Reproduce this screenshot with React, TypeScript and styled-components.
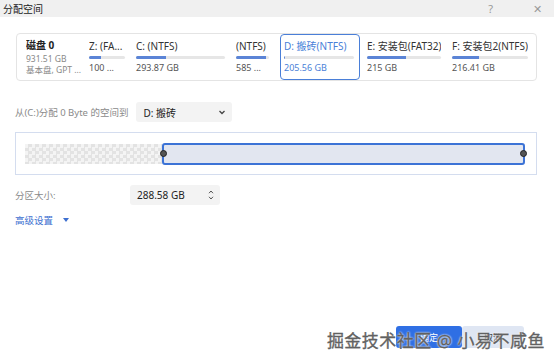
import React from 'react';
import styled, { createGlobalStyle } from 'styled-components';

const GlobalStyle = createGlobalStyle`
  html, body {
    margin: 0;
    padding: 0;
    background: #ffffff;
  }
  body {
    font-family: 'Noto Sans', 'Noto Sans CJK SC', sans-serif;
    color: #333;
  }
`;

const Window = styled.div`
  position: relative;
  width: 554px;
  height: 364px;
  display: flex;
  flex-direction: column;
  background: #fff;
  overflow: hidden;
`;

const TitleBar = styled.div`
  height: 17px;
  display: flex;
  align-items: center;
  justify-content: space-between;
  padding: 0 12px 0 3px;
  background: #f0f0f0;
  font-size: 10px;
  color: #222;
`;

const TitleActions = styled.div`
  display: flex;
  gap: 40px;
  color: #999;
  font-size: 11px;
`;

const Body = styled.div`
  flex: 1;
  display: flex;
  flex-direction: column;
  padding: 16px 17px 0 15px;
`;

const DiskCard = styled.div`
  display: flex;
  align-items: stretch;
  height: 46px;
  margin-left: 1px;
  border: 1px solid #e4e4e4;
  border-radius: 4px;
  padding: 0 0 0 9px;
`;

const DiskInfo = styled.div`
  flex: 0 0 63px;
  display: flex;
  flex-direction: column;
  justify-content: center;
  font-size: 8.5px;
  color: #888;
  line-height: 11px;
  white-space: nowrap;
  overflow: hidden;
`;

const DiskName = styled.div`
  font-size: 10px;
  font-weight: 700;
  color: #222;
  margin-bottom: 2px;
`;

const Part = styled.div<{ $w?: number; $selected?: boolean }>`
  flex: ${(p) => (p.$w ? `0 0 ${p.$w}px` : '1 1 auto')};
  min-width: 0;
  box-sizing: border-box;
  display: flex;
  flex-direction: column;
  justify-content: center;
  padding: ${(p) => (p.$selected ? '0 5px 0 3px' : p.$w ? '0 11px 0 0' : '0 8px 0 0')};
  margin: ${(p) => (p.$selected ? '0 7px 0 0' : '0')};
  border: ${(p) => (p.$selected ? '1.5px solid #4a7fd8' : 'none')};
  border-radius: 4px;
  color: ${(p) => (p.$selected ? '#4a7fd8' : '#333')};
  font-size: 10px;
  line-height: 12px;
`;

const PartLabel = styled.div`
  white-space: nowrap;
  overflow: hidden;
`;

const Bar = styled.div`
  height: 3px;
  margin: 4px 0 3px;
  background: #e6e6e6;
  border-radius: 2px;
  overflow: hidden;
`;

const BarFill = styled.div`
  height: 100%;
  background: #5b84d6;
`;

const PartSize = styled.div<{ $selected?: boolean }>`
  font-size: 9px;
  color: ${(p) => (p.$selected ? '#4a7fd8' : '#555')};
  white-space: nowrap;
`;

const FromRow = styled.div`
  display: flex;
  align-items: center;
  gap: 8px;
  margin-top: 21px;
  font-size: 9.5px;
  color: #8a8a8a;
`;

const Select = styled.div<{ $w: number }>`
  width: ${(p) => p.$w}px;
  height: 20px;
  box-sizing: border-box;
  display: flex;
  align-items: center;
  justify-content: space-between;
  padding: 0 6px 0 7px;
  background: #f3f3f3;
  border-radius: 3px;
  font-size: 10px;
  color: #222;
`;

const Chevron = styled.span`
  display: flex;
  color: #555;
`;

const PartitionBox = styled.div`
  margin-top: 10px;
  height: 43px;
  box-sizing: border-box;
  border: 1px solid #d4ddef;
  display: flex;
  align-items: center;
  padding: 0 11px 0 9px;
`;

const Checker = styled.div`
  width: 137px;
  height: 20px;
  background-color: #f4f4f4;
  background-image: conic-gradient(#e3e3e3 25%, transparent 0 50%, #e3e3e3 0 75%, transparent 0);
  background-size: 7px 7px;
`;

const Handle = styled.span<{ $side: 'left' | 'right' }>`
  position: absolute;
  top: 50%;
  ${(p) => p.$side}: -4px;
  width: 7px;
  height: 7px;
  margin-top: -4px;
  border-radius: 50%;
  background: #555;
  border: 1px solid #222;
  box-sizing: border-box;
`;

const Volume = styled.div`
  position: relative;
  flex: 1;
  height: 22px;
  box-sizing: border-box;
  border: 2px solid #3c73d6;
  border-radius: 3px;
  background: #e2e6f0;
`;

const SizeRow = styled.div`
  display: flex;
  align-items: center;
  margin-top: 10px;
  font-size: 9.5px;
  color: #8a8a8a;
`;

const SizeLabel = styled.div`
  width: 115px;
`;

const SpinArrows = styled.div`
  display: flex;
  flex-direction: column;
  align-items: center;
  gap: 2px;
`;

const Advanced = styled.div`
  display: flex;
  align-items: center;
  gap: 10px;
  margin-top: 8px;
  font-size: 9.5px;
  color: #3d6fd0;
`;

const Footer = styled.div`
  height: 34px;
  display: flex;
  justify-content: flex-end;
  align-items: center;
  padding: 0 30px 10px 0;
`;

const Button = styled.div<{ $primary?: boolean }>`
  width: ${(p) => (p.$primary ? 66 : 62)}px;
  height: 22px;
  display: flex;
  align-items: center;
  justify-content: center;
  border-radius: 3px;
  font-size: 9px;
  background: ${(p) => (p.$primary ? '#2f6fe4' : '#dfe6f3')};
  color: ${(p) => (p.$primary ? '#fff' : '#333')};
`;

const Watermark = styled.div`
  position: absolute;
  right: 9px;
  bottom: 12px;
  font-size: 17px;
  color: #666;
  letter-spacing: 0.5px;
  -webkit-text-stroke: 0.3px #555;
  text-shadow: 0 0 2px #fff, 0 0 2px #fff;
  white-space: nowrap;
`;

const parts = [
  { label: 'Z: (FA...', size: '100 ...', w: 47, fill: 33 },
  { label: 'C: (NTFS)', size: '293.87 GB', w: 100, fill: 34 },
  { label: '(NTFS)', size: '585 ...', w: 44, fill: 92 },
];

const parts2 = [
  { label: 'E: 安装包(FAT32)', size: '215 GB', w: 85, fill: 53 },
  { label: 'F: 安装包2(NTFS)', size: '216.41 GB', w: 0, fill: 36 },
];

const App = () => {
  return (
    <Window>
      <GlobalStyle />
      <TitleBar>
        <span>分配空间</span>
        <TitleActions>
          <span>?</span>
          <span>✕</span>
        </TitleActions>
      </TitleBar>

      <Body>
        <DiskCard>
          <DiskInfo>
            <DiskName>磁盘 0</DiskName>
            <div>931.51 GB</div>
            <div>基本盘, GPT ...</div>
          </DiskInfo>
          {parts.map((p) => (
            <Part key={p.label} $w={p.w}>
              <PartLabel>{p.label}</PartLabel>
              <Bar>
                <BarFill style={{ width: `${p.fill}%` }} />
              </Bar>
              <PartSize>{p.size}</PartSize>
            </Part>
          ))}
          <Part $w={80} $selected>
            <PartLabel>D: 搬砖(NTFS)</PartLabel>
            <Bar>
              <BarFill style={{ width: '2%' }} />
            </Bar>
            <PartSize $selected>205.56 GB</PartSize>
          </Part>
          {parts2.map((p) => (
            <Part key={p.label} $w={p.w || undefined}>
              <PartLabel>{p.label}</PartLabel>
              <Bar>
                <BarFill style={{ width: `${p.fill}%` }} />
              </Bar>
              <PartSize>{p.size}</PartSize>
            </Part>
          ))}
        </DiskCard>

        <FromRow>
          <span>从(C:)分配 0 Byte 的空间到</span>
          <Select $w={96}>
            <span>D: 搬砖</span>
            <Chevron>
              <svg width="8" height="8" viewBox="0 0 8 8">
                <path d="M1.5 3 L4 5.5 L6.5 3" stroke="#444" strokeWidth="1.3" fill="none" />
              </svg>
            </Chevron>
          </Select>
        </FromRow>

        <PartitionBox>
          <Checker />
          <Volume>
            <Handle $side="left" />
            <Handle $side="right" />
          </Volume>
        </PartitionBox>

        <SizeRow>
          <SizeLabel>分区大小:</SizeLabel>
          <Select $w={90}>
            <span>288.58 GB</span>
            <SpinArrows>
              <svg width="6" height="4" viewBox="0 0 6 4">
                <path d="M1 3.2 L3 1 L5 3.2" stroke="#555" strokeWidth="1" fill="none" />
              </svg>
              <svg width="6" height="4" viewBox="0 0 6 4">
                <path d="M1 0.8 L3 3 L5 0.8" stroke="#555" strokeWidth="1" fill="none" />
              </svg>
            </SpinArrows>
          </Select>
        </SizeRow>

        <Advanced>
          <span>高级设置</span>
          <svg width="6" height="5" viewBox="0 0 6 5">
            <path d="M0 0 L6 0 L3 4 Z" fill="#3d6fd0" />
          </svg>
        </Advanced>
      </Body>

      <Footer>
        <Button $primary>确定</Button>
        <Button>取消</Button>
      </Footer>

      <Watermark>掘金技术社区 @ 小易不咸鱼</Watermark>
    </Window>
  );
};

export default App;
